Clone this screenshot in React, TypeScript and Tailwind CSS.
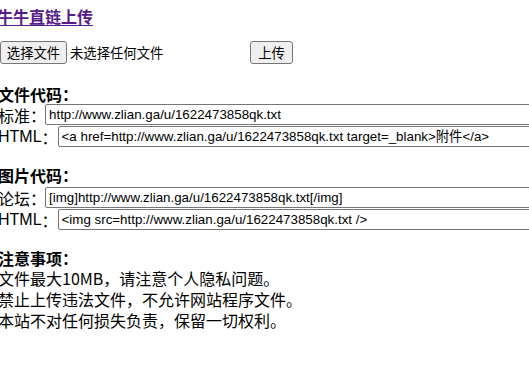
import React from "react";

const cjk = "font-['Microsoft_YaHei','Noto_Sans_CJK_SC',sans-serif]";

function Field({ label, value, labelClass, inputLeft }: { label: React.ReactNode; value: string; labelClass?: string; inputLeft: string }) {
  return (
    <div className="flex h-[22px] items-start">
      <div className={`flex h-[21px] items-center whitespace-nowrap text-[16px] ${labelClass ?? ""}`}>{label}</div>
      <div className={`${inputLeft} h-[21px] flex-1 min-w-0`}>
        <div className="h-[21px] w-[520px] rounded-[2px] border border-[#767676] bg-white flex items-center pl-[3px] overflow-hidden whitespace-nowrap text-[13.33px] text-black font-['Liberation_Sans','Noto_Sans_CJK_SC',sans-serif]">
          {value}
        </div>
      </div>
    </div>
  );
}

export default function App() {
  return (
    <div className={`w-[529px] h-[385px] overflow-hidden bg-white text-black ${cjk}`}>
      <div className="pt-[5px] pl-0 ml-[-3px]">
        <div className="h-[21px] flex items-center">
          <a href="#" className="text-[16px] font-bold text-[#551a8b] underline underline-offset-[2px]">牛牛直链上传</a>
        </div>
      </div>

      <div className="mt-[15px] flex h-[23px] items-center">
        <div className="flex w-[250px] items-center">
          <button className="h-[23px] w-[67px] rounded-[3px] border border-[#767676] bg-[#efefef] text-[13.33px] leading-none">选择文件</button>
          <span className="ml-[3px] text-[13.33px]">未选择任何文件</span>
        </div>
        <button className="h-[23px] w-[43px] rounded-[3px] border border-[#767676] bg-[#efefef] text-[13.33px] leading-none">上传</button>
      </div>

      <div className="ml-[-2px]">
        <div className="mt-[19px] flex h-[21px] items-center text-[16px] font-bold">文件代码：</div>
        <Field label="标准：" value="http://www.zlian.ga/u/1622473858qk.txt" inputLeft="ml-[-1px]" />
        <Field
          label={<><span className="font-['Liberation_Sans',sans-serif]">HTML</span>：</>}
          value="<a href=http://www.zlian.ga/u/1622473858qk.txt target=_blank>附件</a>"
          inputLeft="ml-[0px]"
        />

        <div className="mt-[16px] flex h-[21px] items-center text-[16px] font-bold">图片代码：</div>
        <div className="mt-[2px]">
          <Field label="论坛：" value="[img]http://www.zlian.ga/u/1622473858qk.txt[/img]" inputLeft="ml-[-1px]" />
          <Field
            label={<><span className="font-['Liberation_Sans',sans-serif]">HTML</span>：</>}
            value="<img src=http://www.zlian.ga/u/1622473858qk.txt />"
            inputLeft="ml-[0px]"
          />
        </div>

        <div className="mt-[16px] flex h-[21px] items-center text-[16px] font-bold">注意事项：</div>
        <div className="text-[16px] leading-[21px]">
          <div>文件最大10MB，请注意个人隐私问题。</div>
          <div>禁止上传违法文件，不允许网站程序文件。</div>
          <div>本站不对任何损失负责，保留一切权利。</div>
        </div>
      </div>
    </div>
  );
}
